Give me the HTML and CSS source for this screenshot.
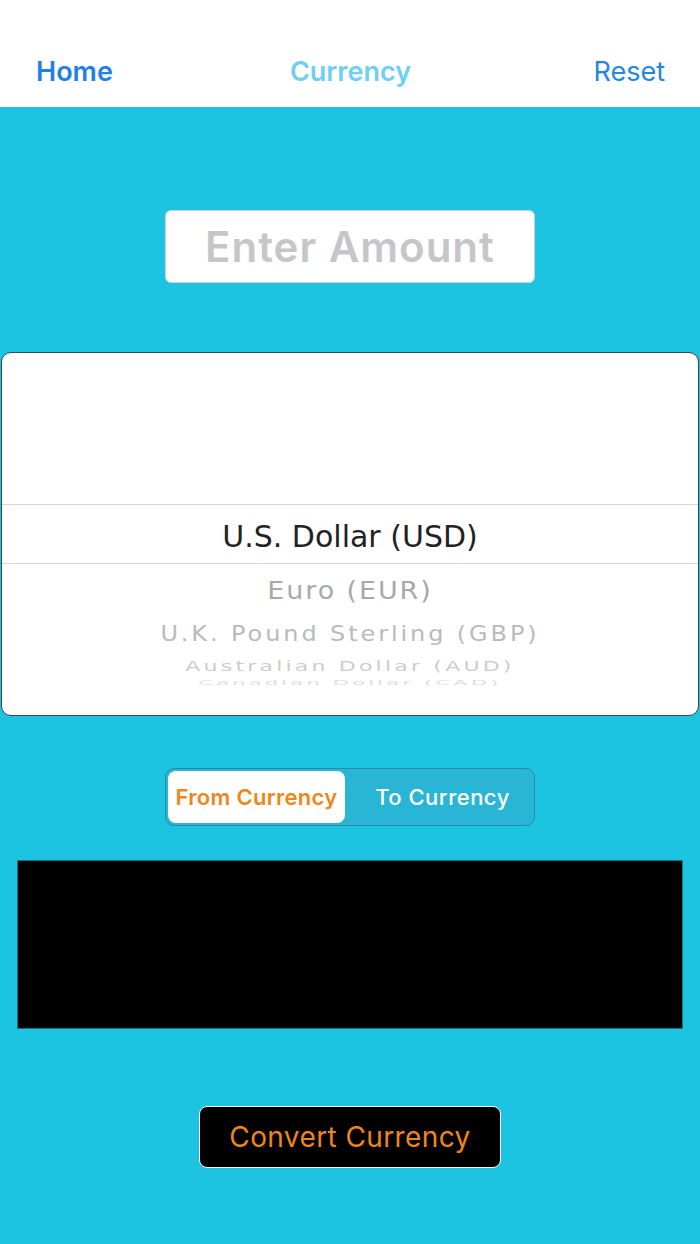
FILE: index.html
```html
<!DOCTYPE html>
<html>
<head>
<meta charset="utf-8">
<link rel="stylesheet" href="styles.css">
</head>
<body>
<div class="app">
  <header class="nav">
    <span class="nav-left">Home</span>
    <span class="nav-title">Currency</span>
    <span class="nav-right">Reset</span>
  </header>
  <main class="content">
    <div class="amount">Enter Amount</div>
    <div class="picker">
      <div class="wheel">
        <div class="row selected">U.S. Dollar (USD)</div>
        <div class="row r1"><span>Euro (EUR)</span></div>
        <div class="row r2"><span>U.K. Pound Sterling (GBP)</span></div>
        <div class="row r3"><span>Australian Dollar (AUD)</span></div>
        <div class="row r4"><span>Canadian Dollar (CAD)</span></div>
      </div>
    </div>
    <div class="segmented">
      <div class="seg active">From Currency</div>
      <div class="seg">To Currency</div>
    </div>
    <div class="result"></div>
    <div class="convert">Convert Currency</div>
  </main>
</div>
</body>
</html>
```
FILE: styles.css
```css
html, body {
  margin: 0;
  padding: 0;
}
body {
  background: #1dc4e2;
  font-family: Inter, Roboto, "Liberation Sans", sans-serif;
}
.app {
  width: 700px;
  height: 1244px;
  display: flex;
  flex-direction: column;
  overflow: hidden;
}
.nav {
  height: 107px;
  background: #ffffff;
  display: grid;
  grid-template-columns: 1fr auto 1fr;
  align-items: end;
  padding: 0 35px 20px 36px;
  box-sizing: border-box;
  font-size: 27px;
  line-height: 30px;
}
.nav-left {
  color: #1f80e5;
  font-weight: 600;
  justify-self: start;
}
.nav-title {
  color: #6dcff6;
  font-weight: 600;
  justify-self: center;
}
.nav-right {
  color: #2486e2;
  font-weight: 400;
  justify-self: end;
}
.content {
  flex: 1;
  display: flex;
  flex-direction: column;
  align-items: center;
}
.amount {
  margin-top: 103px;
  width: 370px;
  height: 73px;
  box-sizing: border-box;
  background: #ffffff;
  border: 1px solid #c8d3d8;
  border-radius: 6px;
  display: flex;
  align-items: center;
  justify-content: center;
  font-size: 42px;
  font-weight: 600;
  color: #c6c6ca;
  letter-spacing: 1px;
}
.picker {
  margin-top: 69px;
  width: 698px;
  height: 364px;
  box-sizing: border-box;
  background: #ffffff;
  border: 1.5px solid #3c4448;
  border-radius: 10px;
  overflow: hidden;
  font-family: "DejaVu Sans", Verdana, sans-serif;
}
.wheel {
  padding-top: 151px;
  display: flex;
  flex-direction: column;
  height: 333px;
  box-sizing: border-box;
  overflow: hidden;
}
.row {
  display: flex;
  justify-content: center;
  align-items: center;
  flex-shrink: 0;
  white-space: nowrap;
}
.selected {
  height: 60px;
  border-top: 1px solid #d6d6d6;
  border-bottom: 1px solid #d6d6d6;
  box-sizing: border-box;
  font-size: 30px;
  color: #222222;
  padding-top: 4px;
}
.row span {
  display: inline-block;
}
.r1 {
  height: 50px;
  font-size: 27px;
  color: #a9a9a9;
  letter-spacing: 1.9px;
}
.r1 span { transform: scaleY(0.95); }
.r2 {
  height: 40px;
  font-size: 24px;
  color: #bababa;
  letter-spacing: 2.9px;
}
.r2 span { transform: scaleY(0.88); }
.r3 {
  height: 25px;
  font-size: 22px;
  color: #cdcdcd;
  letter-spacing: 3.2px;
}
.r3 span { transform: scaleY(0.66); }
.r4 {
  height: 14px;
  font-size: 21px;
  color: #dedede;
  letter-spacing: 3.2px;
  align-items: flex-start;
}
.r4 span { transform: scaleY(0.3); transform-origin: 50% 0; line-height: 21px; margin-top: 1px; }
.segmented {
  margin-top: 52px;
  width: 370px;
  height: 58px;
  box-sizing: border-box;
  background: #29b6d6;
  border: 1px solid #2b8aa3;
  border-radius: 9px;
  padding: 2px;
  display: flex;
}
.seg {
  flex: 1;
  display: flex;
  align-items: center;
  justify-content: center;
  font-size: 22px;
  font-weight: 500;
  color: #ffffff;
  border-radius: 8px;
  letter-spacing: 0.5px;
}
.seg.active {
  background: #ffffff;
  color: #f0861a;
  font-weight: 600;
  flex: 0 0 177px;
  margin-right: 8px;
  letter-spacing: 0.3px;
}
.result {
  margin-top: 34px;
  width: 666px;
  height: 169px;
  background: #000000;
  border: 1px solid #1a6f84;
  box-sizing: border-box;
}
.convert {
  margin-top: 77px;
  width: 302px;
  height: 62px;
  box-sizing: border-box;
  background: #000000;
  border: 1.5px solid #ffffff;
  border-radius: 8px;
  display: flex;
  align-items: center;
  justify-content: center;
  color: #f0861a;
  font-size: 28px;
  font-weight: 400;
  letter-spacing: 0.4px;
}
```
